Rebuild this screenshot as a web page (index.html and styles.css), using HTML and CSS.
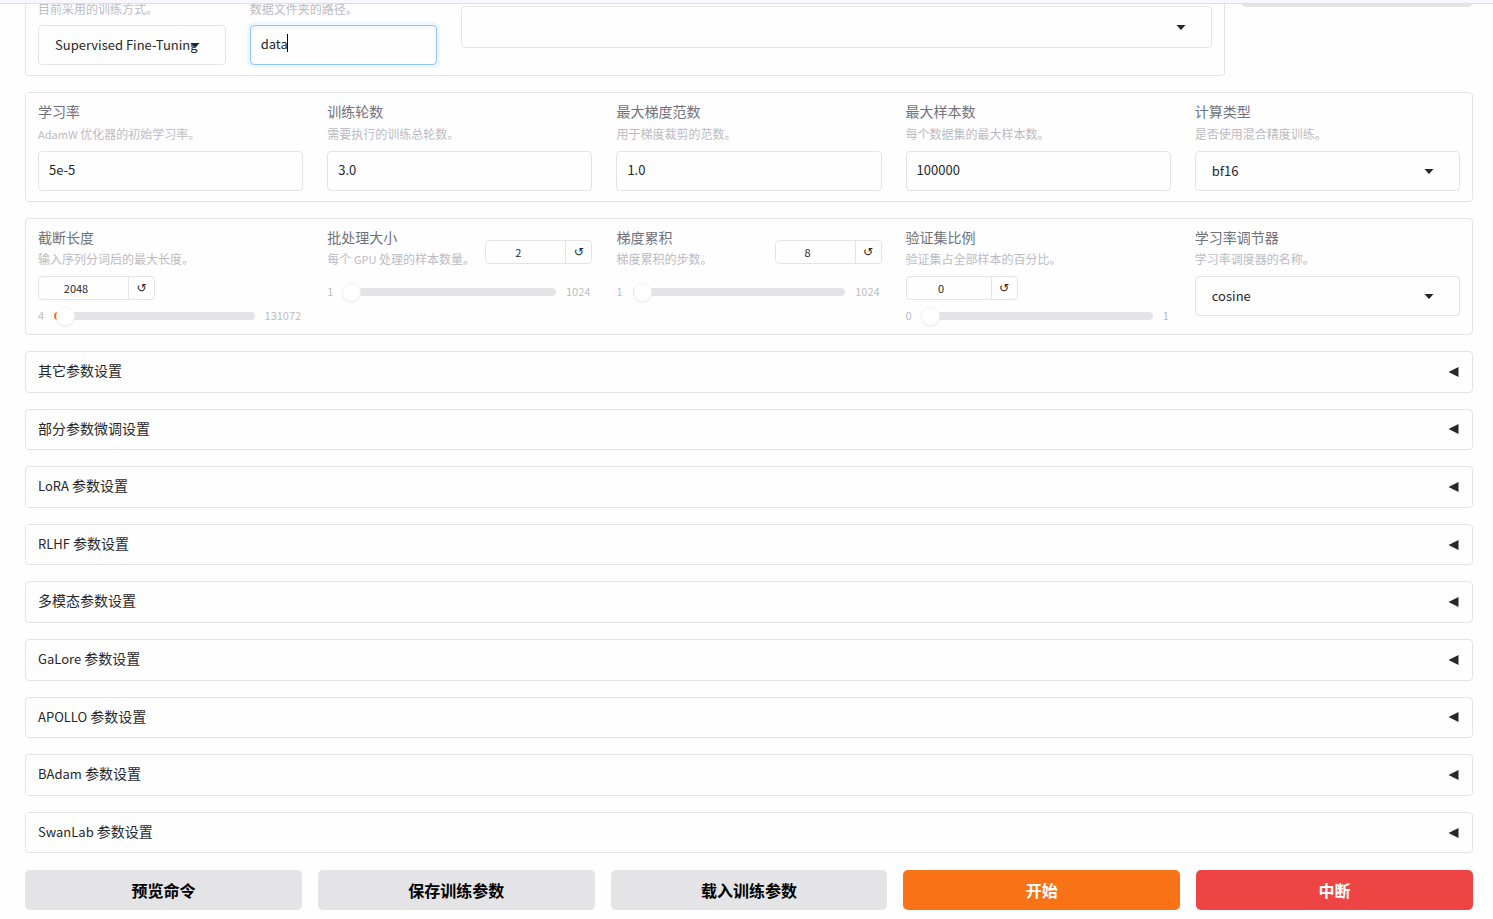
FILE: index.html
```html
<!DOCTYPE html>
<html lang="zh-CN">
<head>
<meta charset="utf-8">
<title>训练参数</title>
<link rel="stylesheet" href="styles.css">
</head>
<body>
<div class="topbar"></div>
<svg class="defs" width="0" height="0" aria-hidden="true">
  <symbol id="caret-down" viewBox="0 0 10 5"><path d="M0.5 0h9L5.6 4.4Q5 5 4.4 4.4Z"/></symbol>
  <symbol id="caret-left" viewBox="0 0 11 10"><path d="M0.5 5L10.5 0v10Z"/></symbol>
</svg>
<main class="page">
  <div class="top-row">
    <section class="panel panel-top">
      <div class="field">
        <label class="hint" for="stage">目前采用的训练方式。</label>
        <div class="select-wrap"><select class="control select" id="stage"><option>Supervised Fine-Tuning</option></select><svg class="arrow"><use href="#caret-down"/></svg></div>
      </div>
      <div class="field">
        <label class="hint" for="dir">数据文件夹的路径。</label>
        <div class="select-wrap"><input class="control text focused" id="dir" type="text" value="data"><span class="cursor"></span></div>
      </div>
      <div class="field field-dataset">
        <div class="select-wrap"><select class="control select tall" aria-label="数据集"><option></option></select><svg class="arrow"><use href="#caret-down"/></svg></div>
      </div>
    </section>
    <div class="side-button"></div>
  </div>

  <section class="panel panel-basic">
    <div class="field">
      <label class="title" for="lr">学习率</label><p class="hint"><span class="latin">AdamW</span> 优化器的初始学习率。</p>
      <input class="control text" id="lr" type="text" value="5e-5">
    </div>
    <div class="field">
      <label class="title" for="epochs">训练轮数</label><p class="hint">需要执行的训练总轮数。</p>
      <input class="control text" id="epochs" type="text" value="3.0">
    </div>
    <div class="field">
      <label class="title" for="norm">最大梯度范数</label><p class="hint">用于梯度裁剪的范数。</p>
      <input class="control text" id="norm" type="text" value="1.0">
    </div>
    <div class="field">
      <label class="title" for="samples">最大样本数</label><p class="hint">每个数据集的最大样本数。</p>
      <input class="control text" id="samples" type="text" value="100000">
    </div>
    <div class="field">
      <label class="title" for="compute">计算类型</label><p class="hint">是否使用混合精度训练。</p>
      <div class="select-wrap"><select class="control select" id="compute"><option>bf16</option></select><svg class="arrow"><use href="#caret-down"/></svg></div>
    </div>
  </section>

  <section class="panel panel-sliders">
    <div class="field">
      <div class="head stacked">
        <div><label class="title" for="cutoff">截断长度</label><p class="hint">输入序列分词后的最大长度。</p></div>
        <div class="number wide"><input id="cutoff" type="text" value="2048"><button type="button" aria-label="重置">↺</button></div>
      </div>
      <div class="slider"><span>4</span><input type="range" aria-label="截断长度" min="4" max="131072" value="2048" style="--fill:1.6%"><span>131072</span></div>
    </div>
    <div class="field">
      <div class="head">
        <div><label class="title" for="batch">批处理大小</label><p class="hint">每个 <span class="latin">GPU</span> 处理的样本数量。</p></div>
        <div class="number"><input id="batch" type="text" value="2"><button type="button" aria-label="重置">↺</button></div>
      </div>
      <div class="slider"><span>1</span><input type="range" aria-label="批处理大小" min="1" max="1024" value="2" style="--fill:0.1%"><span>1024</span></div>
    </div>
    <div class="field">
      <div class="head">
        <div><label class="title" for="accum">梯度累积</label><p class="hint">梯度累积的步数。</p></div>
        <div class="number"><input id="accum" type="text" value="8"><button type="button" aria-label="重置">↺</button></div>
      </div>
      <div class="slider"><span>1</span><input type="range" aria-label="梯度累积" min="1" max="1024" value="8" style="--fill:0.7%"><span>1024</span></div>
    </div>
    <div class="field">
      <div class="head stacked">
        <div><label class="title" for="val">验证集比例</label><p class="hint">验证集占全部样本的百分比。</p></div>
        <div class="number medium"><input id="val" type="text" value="0"><button type="button" aria-label="重置">↺</button></div>
      </div>
      <div class="slider"><span>0</span><input type="range" aria-label="验证集比例" min="0" max="1" step="0.001" value="0" style="--fill:0%"><span>1</span></div>
    </div>
    <div class="field">
      <label class="title" for="sched">学习率调节器</label><p class="hint">学习率调度器的名称。</p>
      <div class="select-wrap"><select class="control select" id="sched"><option>cosine</option></select><svg class="arrow"><use href="#caret-down"/></svg></div>
    </div>
  </section>

  <button type="button" class="accordion"><span>其它参数设置</span><svg><use href="#caret-left"/></svg></button>
  <button type="button" class="accordion"><span>部分参数微调设置</span><svg><use href="#caret-left"/></svg></button>
  <button type="button" class="accordion"><span><span class="latin">LoRA</span> 参数设置</span><svg><use href="#caret-left"/></svg></button>
  <button type="button" class="accordion"><span><span class="latin">RLHF</span> 参数设置</span><svg><use href="#caret-left"/></svg></button>
  <button type="button" class="accordion"><span>多模态参数设置</span><svg><use href="#caret-left"/></svg></button>
  <button type="button" class="accordion"><span><span class="latin">GaLore</span> 参数设置</span><svg><use href="#caret-left"/></svg></button>
  <button type="button" class="accordion"><span><span class="latin">APOLLO</span> 参数设置</span><svg><use href="#caret-left"/></svg></button>
  <button type="button" class="accordion"><span><span class="latin">BAdam</span> 参数设置</span><svg><use href="#caret-left"/></svg></button>
  <button type="button" class="accordion"><span><span class="latin">SwanLab</span> 参数设置</span><svg><use href="#caret-left"/></svg></button>

  <div class="actions">
    <button type="button" class="action">预览命令</button>
    <button type="button" class="action">保存训练参数</button>
    <button type="button" class="action">载入训练参数</button>
    <button type="button" class="action primary">开始</button>
    <button type="button" class="action stop">中断</button>
  </div>
</main>
</body>
</html>
```

FILE: styles.css
```css
* { box-sizing: border-box; }

body {
  margin: 0;
  background: #fefefe;
  color: #27272a;
  font-family: "Noto Sans CJK SC", sans-serif;
  font-size: 14px;
}

button, input, select { font: inherit; color: inherit; margin: 0; }
p { margin: 0; }
.defs { position: absolute; }

.topbar {
  position: fixed;
  top: 0;
  left: 0;
  right: 0;
  z-index: 2;
  height: 4px;
  background: #f8f7ff;
  border-bottom: 1px solid #dfdde9;
}

.page {
  display: flex;
  flex-direction: column;
  gap: 16px;
  padding: 0 20px 8px 25px;
}

.top-row {
  display: grid;
  grid-template-columns: 150fr 29fr;
  gap: 16px;
  align-items: start;
}

.side-button {
  height: 7px;
  background: #e4e4e7;
  border-radius: 0 0 5px 5px;
}

.panel {
  display: grid;
  grid-template-columns: repeat(5, minmax(0, 1fr));
  column-gap: 24px;
  padding: 9px 12px 10px;
  border: 1px solid #e4e4e7;
  border-radius: 4px;
}

.panel-top {
  grid-template-columns: minmax(0, 1fr) minmax(0, 1fr) minmax(0, 4fr);
  padding-top: 0;
  border-top: 0;
  border-radius: 0 0 4px 4px;
}

.panel-top .hint { margin-bottom: 7px; }
.panel-top .field-dataset { padding-top: 6px; }
.panel-sliders { padding-bottom: 9px; }

.title {
  display: block;
  padding-bottom: 2px;
  line-height: 18px;
  color: #71717a;
}

.hint {
  display: block;
  line-height: 18px;
  font-size: 12px;
  color: #bbbbc2;
  white-space: nowrap;
}

.hint .latin { font-size: 11px; }
.accordion .latin { font-size: 13px; }

.panel-basic .hint { margin: 3px 0 8px; }
.panel-sliders .hint { margin: 2px 0 8px; }

.control {
  display: block;
  width: 100%;
  height: 40px;
  border: 1px solid #e4e4e7;
  border-radius: 4px;
  background: #fefefe;
  font-size: 13px;
  outline: 0;
}

.text { padding: 0 10px 4px; }

.focused {
  border-color: #93c5fd;
  box-shadow: 0 0 0 3px #eff6ff, inset 0 2px 4px #0000000d;
}

.select { appearance: none; padding: 0 0 2px 16px; }
.tall { height: 42px; }
.select-wrap { position: relative; }

.arrow {
  position: absolute;
  right: 26px;
  top: calc(50% - 2px);
  width: 10px;
  height: 5px;
  fill: #27272a;
  pointer-events: none;
}

.cursor {
  position: absolute;
  left: 37px;
  top: 9px;
  width: 1px;
  height: 18px;
  background: #000;
}

.head {
  display: flex;
  justify-content: space-between;
  align-items: center;
  height: 48px;
}

.head.stacked { display: block; height: auto; }

.number {
  display: flex;
  width: 107px;
  height: 24px;
  border: 1px solid #e4e4e7;
  border-radius: 4px;
  font-size: 11px;
}

.number.wide { width: 117px; }
.number.medium { width: 112px; }

.number input {
  flex: 1;
  min-width: 0;
  padding: 0 15px 1px 0;
  border: 0;
  background: none;
  text-align: center;
}

.number button {
  width: 26px;
  padding: 0;
  border: 0;
  border-left: 1px solid #e4e4e7;
  background: none;
  font-family: "DejaVu Sans", sans-serif;
  font-size: 12px;
  line-height: 20px;
}

.slider {
  display: flex;
  align-items: center;
  gap: 10px;
  height: 18px;
  margin-top: 7px;
  padding-right: 2px;
  font-size: 11px;
  line-height: 16px;
  color: #bbbbc2;
}

.slider span { padding-bottom: 2px; }

.slider input {
  flex: 1;
  min-width: 0;
  height: 8px;
  appearance: none;
  border-radius: 4px;
  background: linear-gradient(to right, #f97316 var(--fill), #e4e4e7 var(--fill));
}

.slider input::-webkit-slider-thumb {
  appearance: none;
  width: 17px;
  height: 17px;
  border-radius: 50%;
  background: #fff;
  box-shadow: 0 0 0 1px #f4f4f5, 0 1px 3px #0000001f;
}

.accordion {
  display: flex;
  justify-content: space-between;
  align-items: center;
  padding: 10px 13px 10px 12px;
  border: 1px solid #e4e4e7;
  border-radius: 4px;
  background: none;
  line-height: 1.4;
  text-align: left;
}

.accordion > span { margin: -1px 0 1px; }
.accordion svg { width: 11px; height: 10px; fill: #27272a; }

.actions {
  display: grid;
  grid-template-columns: repeat(5, minmax(0, 1fr));
  gap: 16px;
  margin-top: 1px;
}

.action {
  height: 40px;
  padding: 0;
  border: 0;
  border-radius: 5px;
  background: #e4e4e7;
  color: #000;
  font-size: 16px;
  font-weight: 700;
}

.primary { background: #f97316; color: #fff; }
.stop { background: #ef4444; color: #fff; }
```
